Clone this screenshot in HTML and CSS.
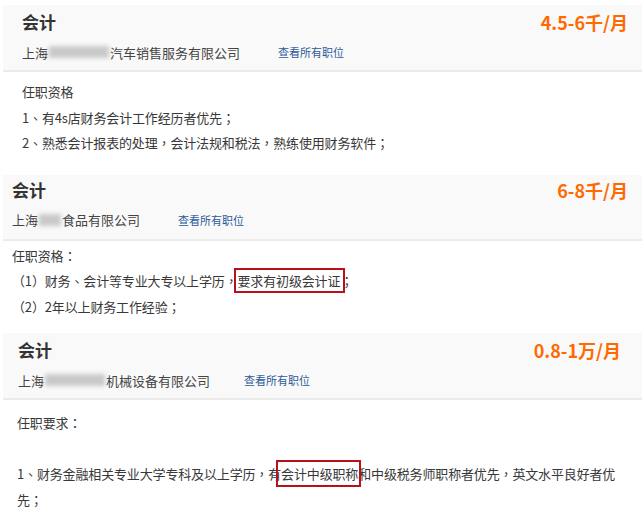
FILE: index.html
```html
<!DOCTYPE html>
<html lang="zh-CN">
<head>
<meta charset="utf-8">
<link rel="stylesheet" href="styles.css">
</head>
<body>
<div class="job job-a">
  <div class="head">
    <div class="row-top">
      <span class="title">会计</span>
      <span class="salary">4.5-6千/月</span>
    </div>
    <div class="row-sub">
      <span class="company">上海<span class="blur w64"></span>汽车销售服务有限公司</span>
      <a class="link">查看所有职位</a>
    </div>
  </div>
  <div class="body" lang="zh-Hant">
    <p>任职资格</p>
    <p>1、有4s店财务会计工作经历者优先；</p>
    <p>2、熟悉会计报表的处理，会计法规和税法，熟练使用财务软件；</p>
  </div>
</div>

<div class="job job-b">
  <div class="head">
    <div class="row-top">
      <span class="title">会计</span>
      <span class="salary">6-8千/月</span>
    </div>
    <div class="row-sub">
      <span class="company">上海<span class="blur w24"></span>食品有限公司</span>
      <a class="link">查看所有职位</a>
    </div>
  </div>
  <div class="body" lang="zh-Hant">
    <p>任职资格：</p>
    <p>（1）财务、会计等专业大专以上学历，<span class="mark mark-b">要求有初级会计证</span>；</p>
    <p>（2）2年以上财务工作经验；</p>
  </div>
</div>

<div class="job job-c">
  <div class="head">
    <div class="row-top">
      <span class="title">会计</span>
      <span class="salary">0.8-1万/月</span>
    </div>
    <div class="row-sub">
      <span class="company">上海<span class="blur w64"></span>机械设备有限公司</span>
      <a class="link">查看所有职位</a>
    </div>
  </div>
  <div class="body" lang="zh-Hant">
    <p>任职要求：</p>
    <p>&nbsp;</p>
    <p>1、财务金融相关专业大学专科及以上学历，有<span class="mark mark-c">会计中级职称</span>和中级税务师职称者优先，英文水平良好者优先；</p>
  </div>
</div>
</body>
</html>
```
FILE: styles.css
```css
* { box-sizing: border-box; }
html, body { margin: 0; padding: 0; background: #fff; }
body {
  width: 642px;
  font-family: "Noto Sans CJK SC", sans-serif;
  color: #333;
  font-size: 13px;
}
p { margin: 0; }

.head {
  margin-left: 3px;
  background: #f9f9f9;
  border-bottom: 2px solid #ebebeb;
  padding-top: 5px;
  height: 67px;
}
.row-top {
  display: flex;
  justify-content: space-between;
  align-items: center;
  height: 24px;
}
.title {
  font-size: 17px;
  font-weight: bold;
  color: #333;
  line-height: 24px;
}
.salary {
  font-size: 18px;
  font-weight: bold;
  color: #ff6a00;
  line-height: 24px;
}
.row-sub {
  display: flex;
  align-items: center;
  margin-top: 8px;
  height: 20px;
}
.company {
  font-size: 13px;
  color: #444;
  display: inline-flex;
  align-items: center;
}
.blur {
  display: inline-block;
  height: 12px;
  background: #c9c9c9;
  filter: blur(2px);
  margin: 0 1px;
}
.w64 { width: 60px; }
.w24 { width: 22px; }
.link {
  font-size: 11px;
  color: #2b5b98;
  text-decoration: none;
}

.body {
  font-family: "Noto Sans CJK TC", "Noto Sans CJK SC", sans-serif;
  line-height: 25.5px;
  color: #383838;
  letter-spacing: -0.15px;
}

.job-a { padding-top: 5px; }
.job-a .head { padding-left: 19px; padding-right: 14px; }
.job-a .link { margin-left: 38px; }
.job-a .body { padding: 7px 0 0 22px; }

.job-b { padding-top: 19px; }
.job-b .head { padding-left: 9px; padding-right: 14px; }
.job-b .head { padding-top: 3px; height: 66px; }
.job-b .link { margin-left: 38px; }
.job-b .body { padding: 2px 0 0 12px; }

.job-c { padding-top: 14px; }
.job-c .head { padding-left: 15px; padding-right: 21px; }
.job-c .link { margin-left: 34px; }
.job-c .body { padding: 10px 22px 0 17px; }

.mark { position: relative; }
.mark::after {
  content: "";
  position: absolute;
  border: 2px solid #b5121b;
  pointer-events: none;
}
.mark-b::after { left: -4px; right: -5px; top: -3px; bottom: -3px; }
.mark-c::after { left: -5px; right: -3px; top: -4px; bottom: -4px; }
```
